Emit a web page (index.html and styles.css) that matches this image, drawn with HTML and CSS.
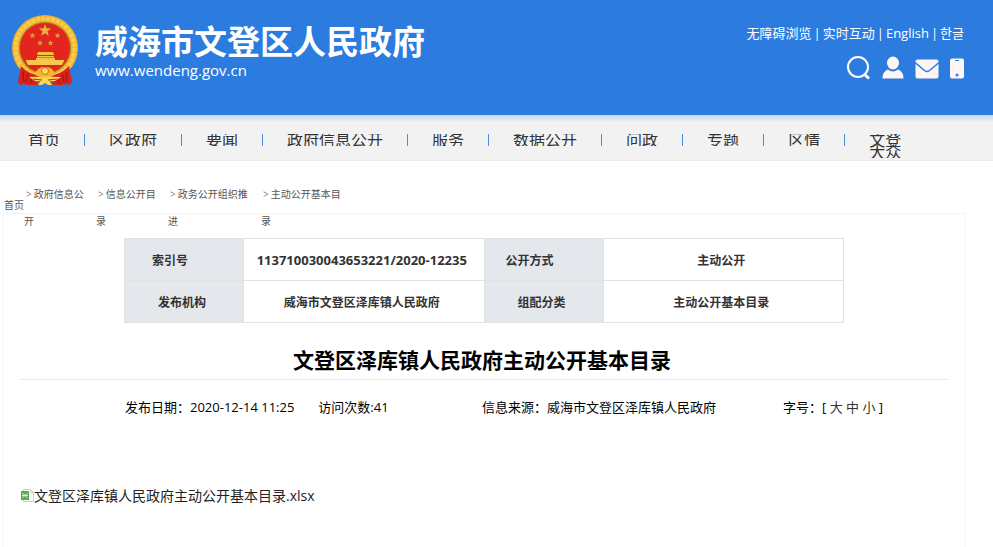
FILE: index.html
```html
<!DOCTYPE html>
<html lang="zh-CN">
<head>
    <meta charset="UTF-8">
    <meta name="viewport" content="width=device-width, initial-scale=1.0">
    <title>文登区泽库镇人民政府主动公开基本目录</title>
    <link rel="stylesheet" href="styles.css">
</head>
<body>
    <header class="header">
        <a class="logo" href="#">
            <svg class="emblem" viewBox="0 0 68 74" aria-hidden="true">
                <!-- wheat ring -->
                <circle cx="34" cy="34" r="33" fill="#f0b030"/>
                <circle cx="34" cy="34" r="29.500" fill="none" stroke="#fccb4a" stroke-width="4" stroke-dasharray="4 1"/>
                <circle cx="34" cy="34" r="26" fill="#a8801c"/>
                <circle cx="34" cy="34" r="25" fill="#e4241e"/>
                <!-- stars -->
                <path fill="#e9b23a" d="M34 10l1.500 4.300 4.700.1-3.700 2.900 1.300 4.500-3.800-2.600-3.800 2.600 1.300-4.500-3.700-2.900 4.700-.1z"/>
                <g fill="#dba034">
                    <path d="M21.500 18.500l.8 2 2.200.1-1.700 1.400.6 2.100-1.900-1.200-1.900 1.200.6-2.100-1.700-1.400 2.200-.1z"/>
                    <path d="M46.500 18.500l.8 2 2.200.1-1.700 1.400.6 2.100-1.900-1.200-1.900 1.200.6-2.100-1.700-1.400 2.200-.1z"/>
                    <path d="M29 26l.8 2 2.200.1-1.700 1.400.6 2.100-1.900-1.200-1.900 1.200.6-2.100-1.700-1.400 2.200-.1z"/>
                    <path d="M39.500 26l.8 2 2.200.1-1.700 1.400.6 2.100-1.900-1.200-1.900 1.200.6-2.100-1.700-1.400 2.200-.1z"/>
                </g>
                <!-- gate -->
                <path fill="#f3c443" d="M27 38h15l1 3H26zM26 42h17v1.500H26zM25 44h19v2H25z"/>
                <path fill="#f8c84c" d="M14.500 46h39l-2.500 5H17z"/>
                <!-- ribbons -->
                <path fill="#d9201a" d="M10 52q8 9 19 9l-3 10H16l-4-1-3 1-2-3zM58 52q-8 9-19 9l3 10h10l4-1 3 1 2-3z"/>
                <path fill="none" stroke="#a01210" d="M12 58l1 10M17 60l-2 8M22 62l-3 8M56 58l-1 10M51 60l2 8M46 62l3 8"/>
                <!-- gear and knot -->
                <path fill="#f5b52e" d="M27 55l4-2 3 1 3-1 4 2 4 5-5 3-6-2-6 2-5-3z"/>
                <circle cx="34" cy="57" r="3.500" fill="#ffda62" stroke="#bd7914"/>
                <path fill="#ffd54f" d="M18 63q8-1 16 1 8-2 16-1l-6 4q-4 1-6-1l3 5h-4l-3-2-3 2h-4l3-5q-2 2-6 1z"/>
                <path fill="none" stroke="#c4251a" d="M22 65l9 1M46 65l-9 1"/>
            </svg>
            <span class="logo-text">
                <span class="logo-name">威海市文登区人民政府</span>
                <span class="logo-url">www.wendeng.gov.cn</span>
            </span>
        </a>
        <div class="tools">
            <div class="top-links">
                <a href="#">无障碍浏览</a><span>|</span><a href="#">实时互动</a><span>|</span><a href="#">English</a><span>|</span><a href="#">한글</a>
            </div>
            <div class="top-icons">
                <a href="#" aria-label="搜索">
                    <svg width="24" height="24" viewBox="0 0 24 24"><circle cx="11" cy="11" r="10" fill="none" stroke="#fff" stroke-width="2"/><path d="M17 18l5 4.500" stroke="#fff" stroke-width="3"/></svg>
                </a>
                <a href="#" aria-label="用户">
                    <svg width="22" height="24" viewBox="0 0 22 24"><ellipse cx="11" cy="7" rx="6" ry="6.500" fill="#fff5f5"/><path fill="#fff5f5" d="M.5 22.500c0-5 2-7.500 5.500-9q5 4 10 0c3.500 1.500 5.500 4 5.500 9z"/></svg>
                </a>
                <a href="#" aria-label="邮箱">
                    <svg width="24" height="24" viewBox="0 0 24 24"><rect x=".5" y="3.500" width="23" height="19" rx="2" fill="#fff5f5"/><path d="M0 6.500l9.500 8q2.500 2 5 0l9.500-8" fill="none" stroke="#2c7cdf" stroke-width="1.500"/></svg>
                </a>
                <a href="#" aria-label="手机">
                    <svg width="14" height="24" viewBox="0 0 14 24"><rect y="2.500" width="14" height="20" rx="2" fill="#fff5f5"/><path d="M5 4.500h4" stroke="#2c7cdf"/><circle cx="7" cy="19" r="1.500" fill="#2c7cdf"/></svg>
                </a>
            </div>
        </div>
    </header>

    <nav class="nav">
        <a href="#">首页</a>
        <a href="#">区政府</a>
        <a href="#">要闻</a>
        <a href="#">政府信息公开</a>
        <a href="#">服务</a>
        <a href="#">数据公开</a>
        <a href="#">问政</a>
        <a href="#">专题</a>
        <a href="#">区情</a>
        <a class="nav-last" href="#">文登大众</a>
    </nav>

    <div class="crumbs">
        <a class="crumb-home" href="#">首页</a>
        <a class="crumb" href="#"><i>&gt;</i>政府信息公<br>开</a>
        <a class="crumb" href="#"><i>&gt;</i>信息公开目<br>录</a>
        <a class="crumb crumb-long" href="#"><i>&gt;</i>政务公开组织推<br>进</a>
        <a class="crumb crumb-long" href="#"><i>&gt;</i>主动公开基本目<br>录</a>
    </div>

    <main class="content">
        <table class="info">
            <tr class="info-first">
                <th scope="row">索引号</th>
                <td class="info-number">113710030043653221/2020-12235</td>
                <th scope="row">公开方式</th>
                <td>主动公开</td>
            </tr>
            <tr>
                <th scope="row">发布机构</th>
                <td>威海市文登区泽库镇人民政府</td>
                <th scope="row">组配分类</th>
                <td>主动公开基本目录</td>
            </tr>
        </table>
        <h1 class="title">文登区泽库镇人民政府主动公开基本目录</h1>
        <div class="meta">
            <div class="meta-date">
                <span>发布日期：2020-12-14 11:25</span>
                <span>访问次数:41</span>
            </div>
            <div>信息来源：威海市文登区泽库镇人民政府</div>
            <div>字号：[ <a href="#">大</a> <a href="#">中</a> <a href="#">小</a> ]</div>
        </div>
        <p class="attachment">
            <svg width="14" height="14" viewBox="0 0 14 14" aria-hidden="true"><path d="M3.500.5h7l3 3v9h-10z" fill="#fff" stroke="#ccc"/><path d="M10.500.5v3h3" fill="none" stroke="#ccc"/><rect x="1" y="2" width="8" height="9" fill="#5aa552"/><path d="M2.500 4l5 5M7.500 4l-5 5M2 6.500h6" stroke="#d7f0d2"/></svg><a href="#">文登区泽库镇人民政府主动公开基本目录.xlsx</a>
        </p>
    </main>
</body>
</html>
```
FILE: styles.css
```css
*{
    box-sizing: border-box;
}
body{
    margin: 0;
    font-family: "Open Sans", "Noto Sans CJK SC", "Noto Sans CJK KR", sans-serif;
    font-size: 13px;
    color: #000;
    background-color: #fff;
}
a{
    color: inherit;
    text-decoration: none;
}
svg{
    display: block;
}
.header{
    display: flex;
    justify-content: space-between;
    align-items: flex-start;
    height: 115px;
    padding: 0 29px 0 11px;
    background-color: #2c7cdf;
    color: #fff;
}
.logo{
    display: flex;
    gap: 16px;
    padding-top: 14px;
}
.emblem{
    width: 68px;
    height: 74px;
}
.logo-text{
    display: flex;
    flex-direction: column;
    padding-top: 4px;
}
.logo-name{
    font-size: 33px;
    font-weight: bold;
    line-height: 48px;
}
.logo-url{
    margin-top: -7px;
    font-size: 15px;
    line-height: 22px;
}
.tools{
    display: flex;
    flex-direction: column;
    align-items: flex-end;
    gap: 13px;
    padding-top: 23px;
}
.top-links{
    display: flex;
    gap: 2px;
    line-height: 20px;
}
.top-icons{
    display: flex;
    gap: 11px;
}
.nav{
    display: flex;
    align-items: flex-start;
    height: 46px;
    padding: 19px 4px 0;
    background: linear-gradient(#c3d4ec, #f2f2f2 7px);
    border-bottom: 1px solid #e9edf3;
    font-size: 16px;
    line-height: 12px;
    color: #333;
}
/* the row is only 12px high, so the glyphs are cut top and bottom */
.nav a{
    flex: none;
    overflow: hidden;
    padding: 0 24px;
    border-right: 1px solid #4a90e2;
}
.nav .nav-last{
    width: 80px;
    border-right: 0;
}
.crumbs{
    display: flex;
    height: 52px;
    padding: 20px 4px 0;
    font-size: 10px;
    line-height: 27px;
    color: #555;
}
.crumb-home{
    width: 20px;
    line-height: 48px;
}
.crumb{
    width: 72px;
    white-space: nowrap;
}
.crumb-long{
    width: 93px;
}
.crumb i{
    padding: 0 2px;
    font-style: normal;
    color: #888;
}
.content{
    margin: 0 28px 0 3px;
    padding: 24px 16px 40px;
    border: 1px solid #f5f5f5;
    border-bottom: 0;
}
.info{
    width: 720px;
    max-width: 100%;
    margin: 0 auto;
    border-collapse: collapse;
    table-layout: fixed;
    font-size: 12px;
    font-weight: bold;
    color: #333;
    text-align: center;
}
.info th,
.info td{
    height: 42px;
    padding: 0 4px 0 0;
    border: 1px solid #e2e2e2;
}
.info th{
    width: 119px;
    background-color: #e4e8ed;
}
.info .info-first th{
    padding-right: 28px;
}
.info .info-number{
    font-size: 13px;
}
.title{
    margin: 18px 0 0;
    padding: 0 4px 0 0;
    border-bottom: 1px solid #e8e8e8;
    font-size: 21px;
    line-height: 38px;
    text-align: center;
}
.meta{
    display: grid;
    grid-template-columns: 357fr 301fr 165fr;
    padding: 17px 0 0 105px;
    line-height: 20px;
}
.meta-date{
    display: flex;
    gap: 24px;
}
.meta a{
    color: #333;
}
.attachment{
    display: flex;
    align-items: center;
    margin: 68px 0 0;
    font-size: 14px;
    line-height: 22px;
    color: #222;
}
```
